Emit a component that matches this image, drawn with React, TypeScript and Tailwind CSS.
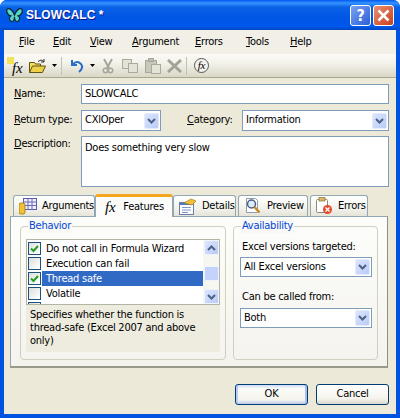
import type { ReactNode } from "react";

const tahoma = "font-['DejaVu_Sans_Condensed','DejaVu_Sans','Liberation_Sans',sans-serif]";

const menuItems = [
  { key: "F", rest: "ile", width: "w-[34px]" },
  { key: "E", rest: "dit", width: "w-[37px]" },
  { key: "V", rest: "iew", width: "w-[42px]" },
  { key: "A", rest: "rgument", width: "w-[63px]" },
  { key: "E", rest: "rrors", width: "w-[51px]" },
  { key: "T", rest: "ools", width: "w-[44px]" },
  { key: "H", rest: "elp", width: "w-[40px]" },
];

function ComboArrow() {
  return (
    <div className="w-[15px] h-[16px] flex items-center justify-center rounded-[2px] bg-[linear-gradient(135deg,#dbe6fd_0%,#b9cbf7_100%)] border border-[#e3ebfd]">
      <svg width="9" height="6" viewBox="0 0 9 6">
        <path d="M1 1l3.5 3.5L8 1" fill="none" stroke="#4d6185" strokeWidth="2" />
      </svg>
    </div>
  );
}

function Combo({ value, className }: { value: string; className: string }) {
  return (
    <div className={`bg-white border border-[#7f9db9] flex items-center justify-between pl-[3px] pr-[1px] ${className}`}>
      <span>{value}</span>
      <ComboArrow />
    </div>
  );
}

function Check({ checked }: { checked?: boolean }) {
  return (
    <div className="w-[13px] h-[13px] shrink-0 border border-[#1c5180] bg-[linear-gradient(135deg,#dcdcd7_0%,#ffffff_90%)] flex items-center justify-center">
      {checked && (
        <svg width="9" height="9" viewBox="0 0 9 9">
          <path d="M1 4.5l2.5 2.5L8 2" fill="none" stroke="#21a121" strokeWidth="2" />
        </svg>
      )}
    </div>
  );
}

function ListRow({ label, checked, selected }: { label: string; checked?: boolean; selected?: boolean }) {
  return (
    <div className="h-[15px] flex items-center shrink-0">
      <div className="w-[15px] flex justify-center">
        <Check checked={checked} />
      </div>
      <span className={`h-[15px] flex-1 pl-[4px] leading-[15px] ${selected ? "bg-[#316ac5] text-white" : ""}`}>{label}</span>
    </div>
  );
}

function ScrollButton({ up }: { up?: boolean }) {
  return (
    <div className="w-[15px] h-[15px] rounded-[2px] border border-[#eef3fe] bg-[linear-gradient(135deg,#dbe6fd_0%,#b9cbf7_100%)] flex items-center justify-center">
      <svg width="9" height="6" viewBox="0 0 9 6">
        <path d={up ? "M1 5l3.5-3.5L8 5" : "M1 1l3.5 3.5L8 1"} fill="none" stroke="#4d6185" strokeWidth="2" />
      </svg>
    </div>
  );
}

function Group({ title, className, children }: { title: string; className: string; children: ReactNode }) {
  return (
    <div className={`relative border border-[#d0d0bf] rounded-[4px] ${className}`}>
      <span className="absolute left-[7px] top-[-8px] px-[1px] leading-[14px] text-[#0046d5] bg-[#f8f8f5]">{title}</span>
      {children}
    </div>
  );
}

function Tab({ label, icon, active, width }: { label: string; icon: ReactNode; active?: boolean; width: string }) {
  if (active) {
    return (
      <div className={`relative z-10 h-[23px] mb-[-1px] flex items-center gap-[8px] pl-[9px] bg-[#fbfbf9] border-x border-[#91a7b4] rounded-t-[3px] border-t-[3px] border-t-[#f4a71d] ${width}`}>
        {icon}
        <span>{label}</span>
      </div>
    );
  }
  return (
    <div className={`h-[21px] flex items-center gap-[5px] pl-[5px] bg-[linear-gradient(180deg,#ffffff_0%,#f3f3ed_60%,#e6e4d8_100%)] border border-b-0 border-[#91a7b4] rounded-t-[3px] ${width}`}>
      {icon}
      <span>{label}</span>
    </div>
  );
}

function FxIcon({ className }: { className: string }) {
  return <span className={`font-['Liberation_Serif',serif] italic text-black leading-none ${className}`}>fx</span>;
}

function GridIcon() {
  return (
    <svg width="18" height="17" viewBox="0 0 18 17">
      <rect x="4.5" y="0.5" width="13" height="11" fill="#eef0fb" stroke="#5c5ca8" />
      <path d="M4.5 4h13M4.5 7.5h13M9 .5v11M13 .5v11" stroke="#6a6ab8" />
      <rect x="0" y="5" width="6" height="11" rx="2" fill="#f0c238" stroke="#b08518" />
    </svg>
  );
}

function DetailsIcon() {
  return (
    <svg width="18" height="17" viewBox="0 0 18 17">
      <rect x="0.5" y="4.5" width="14" height="12" fill="#ffffff" stroke="#6a7fa8" />
      <rect x="1" y="5" width="13" height="2" fill="#4f79c8" />
      <path d="M3 9.5h9M3 12h9M3 14.5h6" stroke="#8098c8" />
      <path d="M5 5l7-4 5 2-4 4z" fill="#f2c13a" stroke="#a57f18" strokeWidth="0.7" />
    </svg>
  );
}

function PreviewIcon() {
  return (
    <svg width="18" height="18" viewBox="0 0 18 18">
      <path d="M2.5 1.5h9l2 2v12h-11z" fill="#ffffff" stroke="#8f9cb0" />
      <circle cx="7.5" cy="7" r="4" fill="#dfeafa" stroke="#4d5f82" strokeWidth="1.5" />
      <path d="M10.5 10l5 5.5" stroke="#c98a28" strokeWidth="2.5" />
    </svg>
  );
}

function ErrorsIcon() {
  return (
    <svg width="17" height="18" viewBox="0 0 17 18">
      <rect x="0.5" y="2.5" width="11" height="13" rx="1" fill="#ffffff" stroke="#8a8a80" />
      <rect x="3" y="0.5" width="6" height="3.5" fill="#d8b66a" stroke="#8f7433" strokeWidth="0.7" />
      <circle cx="11.5" cy="12.5" r="4.5" fill="#e3482a" />
      <path d="M9.5 10.5l4 4M13.5 10.5l-4 4" stroke="#ffffff" strokeWidth="1.4" />
    </svg>
  );
}

function Sep() {
  return <div className="w-px h-[18px] bg-[#c5c2b0] mx-[4px]" />;
}

function ToolbarIcons() {
  return (
    <div className="h-[24px] flex items-center pl-[3px] bg-[linear-gradient(180deg,#fbfaf7_0%,#f3f2ea_40%,#dad7c6_100%)] border-b border-[#a9a98a]">
      <div className="relative w-[20px] h-[20px]">
        <div className="absolute left-0 top-[1px] w-[7px] h-[7px] bg-[#f3e35c]" />
        <FxIcon className="absolute left-[5px] top-[5px] text-[15px]" />
      </div>
      <svg className="ml-[2px]" width="18" height="16" viewBox="0 0 18 16">
        <path d="M.5 14.5V4.500h5l1 1.500h5V8" fill="#f4dc63" stroke="#5f5410" />
        <path d="M.5 14.5l3-6.500h13l-3 6.500z" fill="#ecd04a" stroke="#5f5410" />
        <path d="M9 3.500q3-3 6 0M15 1v3h-3" fill="none" stroke="#333" />
      </svg>
      <svg className="ml-[5px]" width="5" height="3" viewBox="0 0 5 3"><path d="M0 0h5L2.500 3z" fill="#000" /></svg>
      <Sep />
      <svg className="ml-[4px]" width="14" height="14" viewBox="0 0 14 14">
        <path d="M2 1v5h5M2.500 5.500Q7 1 11 5q3 4-2 8" fill="none" stroke="#2a6dc8" strokeWidth="2" />
      </svg>
      <svg className="ml-[6px]" width="5" height="3" viewBox="0 0 5 3"><path d="M0 0h5L2.500 3z" fill="#000" /></svg>
      <svg className="ml-[7px]" width="12" height="16" viewBox="0 0 12 16">
        <path d="M2 1l5 9M10 1L5 10" stroke="#a6a69a" strokeWidth="2" />
        <circle cx="3.500" cy="12.500" r="2.200" fill="none" stroke="#a6a69a" strokeWidth="1.500" />
        <circle cx="8.500" cy="12.500" r="2.200" fill="none" stroke="#a6a69a" strokeWidth="1.500" />
      </svg>
      <svg className="ml-[8px]" width="16" height="14" viewBox="0 0 16 14">
        <rect x="0.500" y="0.500" width="9" height="9" fill="#e4e3d8" stroke="#aaa99c" />
        <rect x="6.500" y="4.500" width="9" height="9" fill="#e4e3d8" stroke="#aaa99c" />
      </svg>
      <svg className="ml-[7px]" width="16" height="16" viewBox="0 0 16 16">
        <rect x="0.500" y="2.500" width="11" height="12" fill="#c9c8bb" stroke="#a6a69a" />
        <rect x="3.500" y="0.500" width="5" height="3" fill="#bbb" stroke="#a6a69a" />
        <rect x="6.500" y="6.500" width="9" height="9" fill="#e4e3d8" stroke="#aaa99c" />
      </svg>
      <svg className="ml-[6px]" width="15" height="14" viewBox="0 0 15 14">
        <path d="M1 1l13 12M14 1L1 13" stroke="#a3a398" strokeWidth="3" />
      </svg>
      <Sep />
      <div className="ml-[3px] w-[15px] h-[15px] rounded-full border border-[#555] flex items-center justify-center bg-[#f4f3ee]">
        <FxIcon className="text-[11px]" />
      </div>
    </div>
  );
}

export default function App() {
  return (
    <div className={`w-[400px] h-[418px] flex flex-col rounded-t-[7px] bg-[#0053e1] text-[11px] tracking-[-0.25px] text-black overflow-hidden ${tahoma}`}>
      {/* Title bar */}
      <div className="h-[30px] shrink-0 flex items-center pl-[6px] pr-[6px] bg-[linear-gradient(180deg,#0058ee_0%,#3593ff_10%,#0a62e6_24%,#0055e5_60%,#0058ee_88%,#0046c0_100%)]">
        <svg width="17" height="17" viewBox="0 0 18 17">
          <path d="M9 8C7 2 3 0 1 2c-1 3 1 6 4 7-2 1-2 5 1 6 2 0 3-3 3-5 0 2 1 5 3 5 3-1 3-5 1-6 3-1 5-4 4-7-2-2-6 0-8 6z" fill="#58d6c8" stroke="#0a2a3a" strokeWidth="1.400" />
        </svg>
        <span className="ml-[3px] font-['Liberation_Sans',sans-serif] font-bold text-[12px] tracking-normal text-white flex-1 [text-shadow:1px_1px_#0f1089]">SLOWCALC *</span>
        <div className="w-[21px] h-[21px] mt-[1px] mr-[2px] rounded-[3px] border border-white bg-[linear-gradient(135deg,#7ba2f0_0%,#2a5fd8_100%)] flex items-center justify-center text-white font-bold text-[16px]">?</div>
        <div className="w-[21px] h-[21px] mt-[1px] rounded-[3px] border border-white bg-[linear-gradient(135deg,#eb9074_0%,#c8401c_100%)] flex items-center justify-center">
          <svg width="13" height="13" viewBox="0 0 13 13"><path d="M1.500 1.500l10 10M11.500 1.500l-10 10" stroke="#fff" strokeWidth="2.500" /></svg>
        </div>
      </div>

      <div className="flex-1 mx-[4px] mb-[4px] flex flex-col bg-[#ece9d8]">
        {/* Menu bar */}
        <div className="h-[24px] shrink-0 flex items-center pl-[15px] bg-[#f1efe6]">
          {menuItems.map((item, i) => (
            <span key={i} className={item.width}>
              <u>{item.key}</u>
              {item.rest}
            </span>
          ))}
        </div>
        <ToolbarIcons />

        {/* Fields */}
        <div className="pt-[6px] pl-[10px] pr-[7px] flex flex-col">
          <div className="flex items-center h-[20px]">
            <span className="w-[67px]"><u>N</u>ame:</span>
            <div className="flex-1 h-[20px] bg-white border border-[#7f9db9] pl-[3px] leading-[17px]">SLOWCALC</div>
          </div>
          <div className="flex items-center mt-[6px]">
            <span className="w-[67px]"><u>R</u>eturn type:</span>
            <Combo value="CXlOper" className="h-[21px] w-[80px]" />
            <span className="ml-[26px] w-[55px]"><u>C</u>ategory:</span>
            <Combo value="Information" className="h-[21px] flex-1" />
          </div>
          <div className="flex mt-[5px]">
            <span className="w-[67px]"><u>D</u>escription:</span>
            <div className="flex-1 h-[51px] bg-white border border-[#7f9db9] pl-[3px] pt-[3px] leading-[15px]">Does something very slow</div>
          </div>
        </div>

        {/* Tabs */}
        <div className="mt-[8px] ml-[9px] flex items-end h-[21px]">
          <Tab label="Arguments" width="w-[82px]" icon={<GridIcon />} />
          <Tab label="Features" width="w-[78px]" active icon={<FxIcon className="text-[15px]" />} />
          <Tab label="Details" width="w-[63px]" icon={<DetailsIcon />} />
          <div className="w-[2px]" />
          <Tab label="Preview" width="w-[70px]" icon={<PreviewIcon />} />
          <div className="w-[2px]" />
          <Tab label="Errors" width="w-[58px]" icon={<ErrorsIcon />} />
        </div>
        <div className="ml-[6px] mr-[8px] h-[152px] flex gap-[7px] pt-[9px] px-[9px] border border-[#91a7b4] border-r-[#8f8f80] border-b-[#9a9a8a] border-b-2 bg-[linear-gradient(180deg,#fdfdfb_0%,#f4f3ee_100%)]">
          <Group title="Behavior" className="w-[209px] h-[134px] pt-[12px] px-[5px]">
            <div className="h-[66px] flex bg-white border border-[#b2b4a4] overflow-hidden">
              <div className="flex-1 flex flex-col pt-[1px] overflow-hidden">
                <ListRow label="Do not call in Formula Wizard" checked />
                <ListRow label="Execution can fail" />
                <ListRow label="Thread safe" checked selected />
                <ListRow label="Volatile" />
                <ListRow label="ReadTo Call" />
              </div>
              <div className="w-[16px] flex flex-col justify-between bg-[#f7f7f2] pl-px">
                <ScrollButton up />
                <div className="w-[15px] h-[15px] mt-[2px] rounded-[2px] bg-[#c3d3fb] border border-[#eef3fe]" />
                <ScrollButton />
              </div>
            </div>
            <div className="h-[47px] px-[4px] pt-[3px] bg-[#eeecdf] leading-[13px]">
              Specifies whether the function is thread-safe (Excel 2007 and above only)
            </div>
          </Group>
          <Group title="Availability" className="w-[145px] h-[134px] pt-[13px] px-[6px]">
            <div className="pl-[2px] leading-[14px]">Excel versions targeted:</div>
            <Combo value="All Excel versions" className="h-[20px] mt-[3px] w-[132px]" />
            <div className="pl-[2px] mt-[13px] leading-[14px]">Can be called from:</div>
            <Combo value="Both" className="h-[20px] mt-[4px] w-[132px]" />
          </Group>
        </div>

        {/* Buttons */}
        <div className="mt-[16px] pr-[7px] flex justify-end gap-[8px]">
          <button className="w-[73px] h-[21px] rounded-[3px] border border-[#003c74] bg-[linear-gradient(180deg,#cfdcfb_0%,#fbfbf8_20%,#f4f3ec_80%,#bcc8ec_100%)] shadow-[inset_2px_0_#b8cdf5,inset_-2px_0_#a9bfec]">OK</button>
          <button className="w-[73px] h-[21px] rounded-[3px] border border-[#003c74] bg-[linear-gradient(180deg,#ffffff_0%,#f5f4ee_70%,#dcd8cb_100%)]">Cancel</button>
        </div>
      </div>
    </div>
  );
}
